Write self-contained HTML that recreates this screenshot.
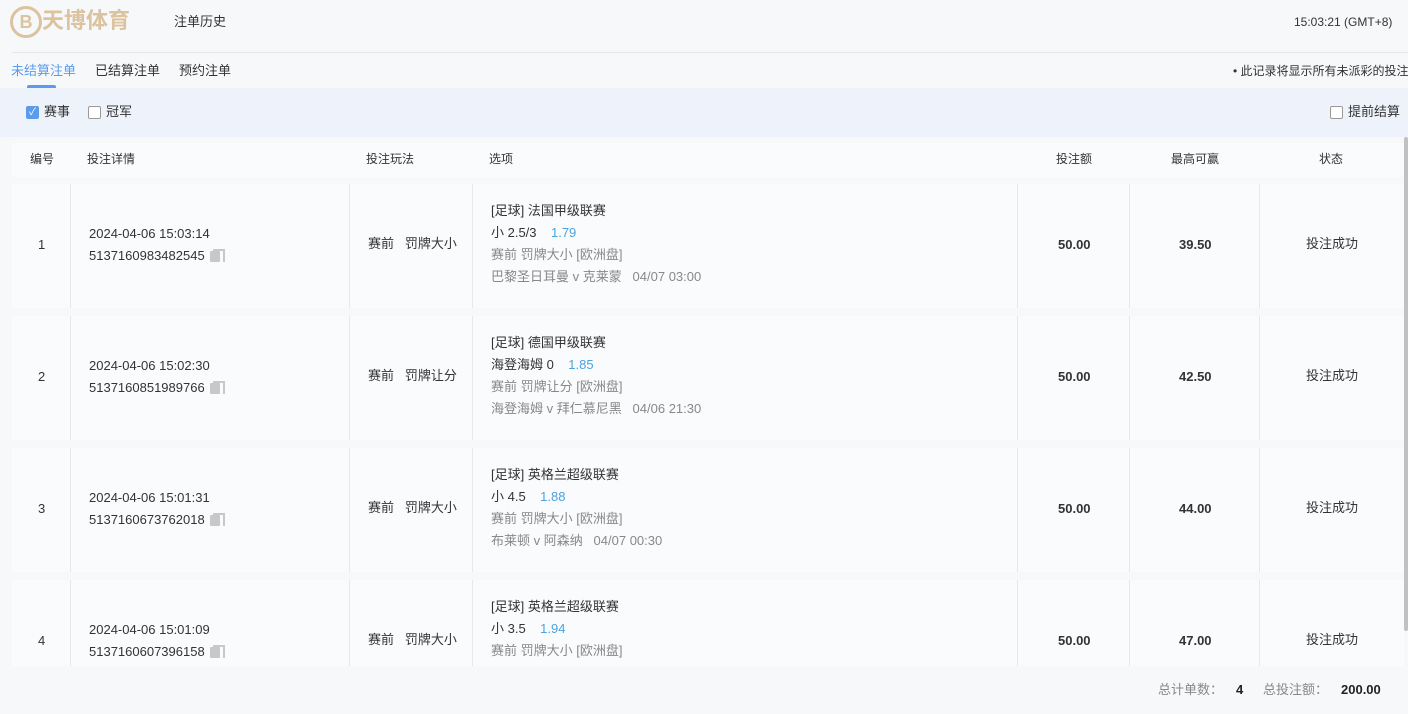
<!DOCTYPE html>
<html><head><meta charset="utf-8"><style>
*{margin:0;padding:0;box-sizing:border-box}
body{width:1408px;height:714px;overflow:hidden;background:#f7f8fa;font-family:"Liberation Sans","Noto Sans CJK SC",sans-serif;font-size:13px;color:#333;position:relative}
.a{position:absolute;white-space:nowrap;line-height:16px}
.row{position:absolute;left:12px;width:1392px;background:#fafbfd;height:124px}
.vl{position:absolute;top:0;bottom:0;width:1px;background:#e6e8ec}
.cb{position:absolute;width:13px;height:13px;border:1px solid #999;border-radius:2px;background:#fff}
.ic{display:inline-block;width:13px;height:13px;vertical-align:-2px;margin-left:5px;position:relative}
.ic:before{content:"";position:absolute;left:0;top:2px;width:10px;height:11px;background:#c8c8c8;border-radius:1px}
.ic:after{content:"";position:absolute;left:3px;top:0;width:10px;height:11px;border-top:2px solid #c8c8c8;border-right:2px solid #c8c8c8}
.m{font-weight:bold;font-size:13px}
</style></head><body>
<div class="a" style="left:10px;top:4px;font-size:22px;line-height:34px;font-weight:bold;color:#dcc3a0;letter-spacing:0px"><span style="display:inline-block;width:32px;height:32px;border:3px solid #dcc3a0;border-radius:50%;text-align:center;line-height:26px;font-size:18px;vertical-align:middle">B</span>天博体育</div>
<div class="a" style="left:174px;top:14px">注单历史</div>
<div class="a" style="left:1294px;top:14px;font-size:12px">15:03:21 (GMT+8)</div>
<div class="a" style="left:12px;top:52px;width:1396px;height:1px;background:#e3e5e8"></div>
<div class="a" style="left:11px;top:63px;color:#5b9bec">未结算注单</div>
<div class="a" style="left:95px;top:63px">已结算注单</div>
<div class="a" style="left:179px;top:63px">预约注单</div>
<div class="a" style="left:27px;top:85px;width:29px;height:3px;background:#5b9bec;border-radius:2px 2px 0 0"></div>
<div class="a" style="left:1233px;top:63px;font-size:12px">• 此记录将显示所有未派彩的投注</div>
<div class="a" style="left:0;top:88px;width:1408px;height:49px;background:#eef3fb"></div>
<div class="cb" style="left:26px;top:106px;background:#5b9bec;border-color:#5b9bec;color:#fff;font-size:10px;line-height:11px;text-align:center">✓</div>
<div class="a" style="left:44px;top:104px">赛事</div>
<div class="cb" style="left:88px;top:106px"></div>
<div class="a" style="left:106px;top:104px">冠军</div>
<div class="cb" style="left:1330px;top:106px"></div>
<div class="a" style="left:1348px;top:104px">提前结算</div>
<div class="a" style="left:12px;top:143px;width:1392px;height:34px;background:#fafbfd"></div>
<div class="a" style="left:30px;top:151px;font-size:12px">编号</div>
<div class="a" style="left:87px;top:151px;font-size:12px">投注详情</div>
<div class="a" style="left:366px;top:151px;font-size:12px">投注玩法</div>
<div class="a" style="left:489px;top:151px;font-size:12px">选项</div>
<div class="a" style="left:1056px;top:151px;font-size:12px">投注额</div>
<div class="a" style="left:1171px;top:151px;font-size:12px">最高可赢</div>
<div class="a" style="left:1319px;top:151px;font-size:12px">状态</div>
<div class="a" style="left:1404px;top:137px;width:4px;height:494px;background:#c1c1c1;border-radius:2px"></div>

<div class="a" style="left:0;top:184px;width:1404px;height:482px;overflow:hidden">
<div class="row" style="top:0">
<div class="vl" style="left:58px"></div><div class="vl" style="left:337px"></div><div class="vl" style="left:460px"></div><div class="vl" style="left:1005px"></div><div class="vl" style="left:1117px"></div><div class="vl" style="left:1247px"></div>
<div class="a" style="left:26px;top:53px">1</div>
<div class="a" style="left:77px;top:42px">2024-04-06 15:03:14</div>
<div class="a" style="left:77px;top:64px">5137160983482545<span class="ic"></span></div>
<div class="a" style="left:356px;top:52px">赛前&nbsp;&nbsp;&nbsp;罚牌大小</div>
<div class="a" style="left:479px;top:19px">[足球] 法国甲级联赛</div>
<div class="a" style="left:479px;top:41px">小 2.5/3 &nbsp;&nbsp;&nbsp;<span style="color:#4aa3df">1.79</span></div>
<div class="a" style="left:479px;top:63px;color:#888">赛前 罚牌大小 [欧洲盘]</div>
<div class="a" style="left:479px;top:85px;color:#888">巴黎圣日耳曼 v 克莱蒙 &nbsp;&nbsp;04/07 03:00</div>
<div class="a m" style="left:1046px;top:53px">50.00</div>
<div class="a m" style="left:1167px;top:53px">39.50</div>
<div class="a" style="left:1294px;top:52px">投注成功</div>
</div>
<div class="row" style="top:132px">
<div class="vl" style="left:58px"></div><div class="vl" style="left:337px"></div><div class="vl" style="left:460px"></div><div class="vl" style="left:1005px"></div><div class="vl" style="left:1117px"></div><div class="vl" style="left:1247px"></div>
<div class="a" style="left:26px;top:53px">2</div>
<div class="a" style="left:77px;top:42px">2024-04-06 15:02:30</div>
<div class="a" style="left:77px;top:64px">5137160851989766<span class="ic"></span></div>
<div class="a" style="left:356px;top:52px">赛前&nbsp;&nbsp;&nbsp;罚牌让分</div>
<div class="a" style="left:479px;top:19px">[足球] 德国甲级联赛</div>
<div class="a" style="left:479px;top:41px">海登海姆 0 &nbsp;&nbsp;&nbsp;<span style="color:#4aa3df">1.85</span></div>
<div class="a" style="left:479px;top:63px;color:#888">赛前 罚牌让分 [欧洲盘]</div>
<div class="a" style="left:479px;top:85px;color:#888">海登海姆 v 拜仁慕尼黑 &nbsp;&nbsp;04/06 21:30</div>
<div class="a m" style="left:1046px;top:53px">50.00</div>
<div class="a m" style="left:1167px;top:53px">42.50</div>
<div class="a" style="left:1294px;top:52px">投注成功</div>
</div>
<div class="row" style="top:264px">
<div class="vl" style="left:58px"></div><div class="vl" style="left:337px"></div><div class="vl" style="left:460px"></div><div class="vl" style="left:1005px"></div><div class="vl" style="left:1117px"></div><div class="vl" style="left:1247px"></div>
<div class="a" style="left:26px;top:53px">3</div>
<div class="a" style="left:77px;top:42px">2024-04-06 15:01:31</div>
<div class="a" style="left:77px;top:64px">5137160673762018<span class="ic"></span></div>
<div class="a" style="left:356px;top:52px">赛前&nbsp;&nbsp;&nbsp;罚牌大小</div>
<div class="a" style="left:479px;top:19px">[足球] 英格兰超级联赛</div>
<div class="a" style="left:479px;top:41px">小 4.5 &nbsp;&nbsp;&nbsp;<span style="color:#4aa3df">1.88</span></div>
<div class="a" style="left:479px;top:63px;color:#888">赛前 罚牌大小 [欧洲盘]</div>
<div class="a" style="left:479px;top:85px;color:#888">布莱顿 v 阿森纳 &nbsp;&nbsp;04/07 00:30</div>
<div class="a m" style="left:1046px;top:53px">50.00</div>
<div class="a m" style="left:1167px;top:53px">44.00</div>
<div class="a" style="left:1294px;top:52px">投注成功</div>
</div>
<div class="row" style="top:396px">
<div class="vl" style="left:58px"></div><div class="vl" style="left:337px"></div><div class="vl" style="left:460px"></div><div class="vl" style="left:1005px"></div><div class="vl" style="left:1117px"></div><div class="vl" style="left:1247px"></div>
<div class="a" style="left:26px;top:53px">4</div>
<div class="a" style="left:77px;top:42px">2024-04-06 15:01:09</div>
<div class="a" style="left:77px;top:64px">5137160607396158<span class="ic"></span></div>
<div class="a" style="left:356px;top:52px">赛前&nbsp;&nbsp;&nbsp;罚牌大小</div>
<div class="a" style="left:479px;top:19px">[足球] 英格兰超级联赛</div>
<div class="a" style="left:479px;top:41px">小 3.5 &nbsp;&nbsp;&nbsp;<span style="color:#4aa3df">1.94</span></div>
<div class="a" style="left:479px;top:63px;color:#888">赛前 罚牌大小 [欧洲盘]</div>
<div class="a m" style="left:1046px;top:53px">50.00</div>
<div class="a m" style="left:1167px;top:53px">47.00</div>
<div class="a" style="left:1294px;top:52px">投注成功</div>
</div>
</div>
<div class="a" style="left:1158px;top:682px;color:#888">总计单数：</div>
<div class="a m" style="left:1236px;top:682px;color:#222">4</div>
<div class="a" style="left:1263px;top:682px;color:#888">总投注额：</div>
<div class="a m" style="left:1341px;top:682px;color:#222">200.00</div>
</body></html>
